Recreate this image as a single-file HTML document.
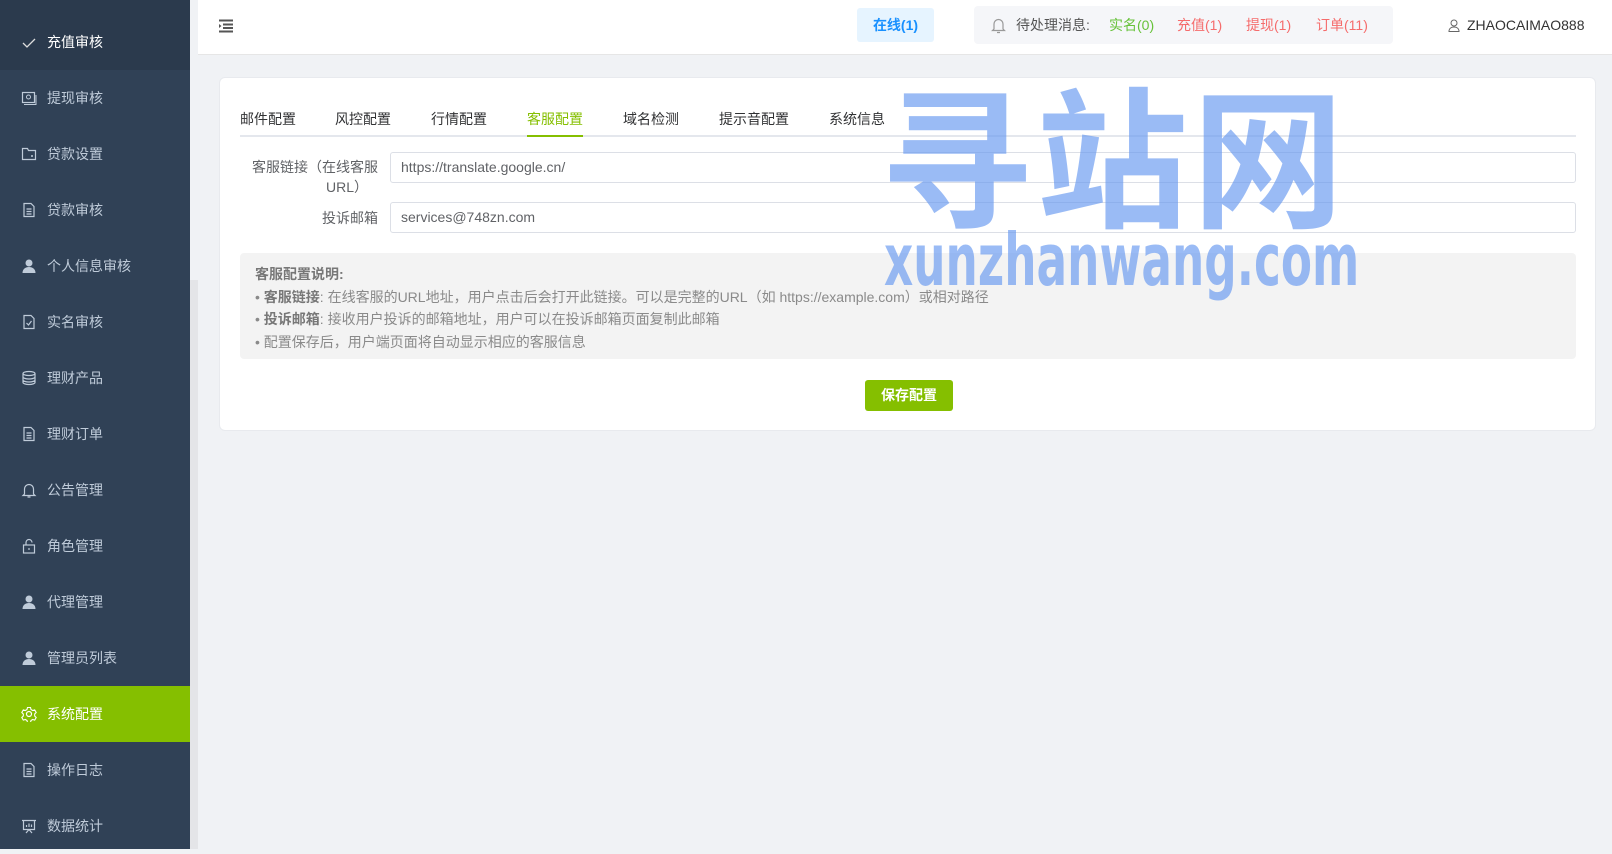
<!DOCTYPE html>
<html><head><meta charset="utf-8"><style>
*{margin:0;padding:0;box-sizing:border-box}
body{width:1612px;height:849px;overflow:hidden;background:#f0f2f5;font-family:"Liberation Sans","Noto Sans CJK SC",sans-serif;position:relative}
.side{position:absolute;left:0;top:0;width:190px;height:849px;background:#304156}
.strip{position:absolute;left:190px;top:0;width:8px;height:849px;background:#e4e5e8}
.strip i{position:absolute;left:0;top:0;width:8px;height:280px;background:#f0f2f5}
.it{position:absolute;left:0;width:190px;height:56px;color:#bfcbd9;font-size:14px;line-height:56px;padding-left:47px}
.it svg{position:absolute;left:21px;top:20px}
.head{position:absolute;left:198px;top:0;right:0;height:55px;background:#fff;border-bottom:1px solid #e6e6e6}
.card{position:absolute;left:219px;top:77px;width:1377px;height:354px;background:#fff;border-radius:6px;border:1px solid #e8eaee}
.tab{position:absolute;top:31px;font-size:14px;color:#303133}
.inp{position:absolute;left:170px;width:1186px;height:31px;border:1px solid #dcdfe6;border-radius:3px;font-size:14px;color:#606266;line-height:29px;padding-left:10px}
.lbl{position:absolute;font-size:14px;color:#606266;text-align:right}
.note{position:absolute;left:20px;top:175px;width:1336px;height:106px;background:#f3f3f3;border-radius:4px;padding:10px 0 0 15px;font-size:14px;color:#8a8a8a;line-height:22.5px}
.note b{color:#777}
</style></head><body>
<div class="side">
<div class="it" style="top:0;height:70px;line-height:84px;background:#2b3a4d;color:#fff"><svg width="16" height="16" viewBox="0 0 16 16" style="top:35px"><path d="M2 8l4 4 8-8" fill="none" stroke="#ddd" stroke-width="1.3"/></svg>充值审核</div>
<div class="it" style="top:70px"><svg width="16" height="16" viewBox="0 0 16 16"><rect x="1.5" y="2.5" width="12" height="10" fill="none" stroke="#bfcbd9" stroke-width="1.2"/><circle cx="7.5" cy="7" r="2" fill="none" stroke="#bfcbd9"/><path d="M3 14.5h12V5" fill="none" stroke="#bfcbd9"/></svg>提现审核</div>
<div class="it" style="top:126px"><svg width="16" height="16" viewBox="0 0 16 16"><path d="M1.5 2.5h5l1 2h7v9h-13z" fill="none" stroke="#bfcbd9" stroke-width="1.2"/><circle cx="11" cy="10" r="1" fill="#bfcbd9"/></svg>贷款设置</div>
<div class="it" style="top:182px"><svg width="16" height="16" viewBox="0 0 16 16"><path d="M3 1.5h7l3 3v10H3z M5.5 7h5 M5.5 9.5h5 M5.5 12h5" fill="none" stroke="#bfcbd9" stroke-width="1.2"/></svg>贷款审核</div>
<div class="it" style="top:238px"><svg width="16" height="16" viewBox="0 0 16 16"><circle cx="8" cy="5" r="3.5" fill="#bfcbd9"/><path d="M1.5 15c0-4 3-6 6.5-6s6.5 2 6.5 6z" fill="#bfcbd9"/></svg>个人信息审核</div>
<div class="it" style="top:294px"><svg width="16" height="16" viewBox="0 0 16 16"><path d="M3 1.5h7l3 3v10H3z M5.5 9l2 2 3-4" fill="none" stroke="#bfcbd9" stroke-width="1.2"/></svg>实名审核</div>
<div class="it" style="top:350px"><svg width="16" height="16" viewBox="0 0 16 16"><ellipse cx="8" cy="3.5" rx="6" ry="2" fill="none" stroke="#bfcbd9" stroke-width="1.2"/><path d="M2 3.5v9c0 1 2.7 2 6 2s6-1 6-2v-9 M2 7c0 1 2.7 2 6 2s6-1 6-2 M2 10c0 1 2.7 2 6 2s6-1 6-2" fill="none" stroke="#bfcbd9" stroke-width="1.2"/></svg>理财产品</div>
<div class="it" style="top:406px"><svg width="16" height="16" viewBox="0 0 16 16"><path d="M3 1.5h7l3 3v10H3z M5.5 7h5 M5.5 9.5h5 M5.5 12h5" fill="none" stroke="#bfcbd9" stroke-width="1.2"/></svg>理财订单</div>
<div class="it" style="top:462px"><svg width="16" height="16" viewBox="0 0 16 16"><path d="M3.5 12V7a4.5 4.5 0 019 0v5l1.5 1.5H2z M6.5 15h3" fill="none" stroke="#bfcbd9" stroke-width="1.2"/></svg>公告管理</div>
<div class="it" style="top:518px"><svg width="16" height="16" viewBox="0 0 16 16"><rect x="2.5" y="7" width="11" height="8" fill="none" stroke="#bfcbd9" stroke-width="1.2"/><path d="M5 7V4.5a3 3 0 016 0 M8 10v2" fill="none" stroke="#bfcbd9" stroke-width="1.2"/></svg>角色管理</div>
<div class="it" style="top:574px"><svg width="16" height="16" viewBox="0 0 16 16"><circle cx="8" cy="5" r="3.5" fill="#bfcbd9"/><path d="M1.5 15c0-4 3-6 6.5-6s6.5 2 6.5 6z" fill="#bfcbd9"/></svg>代理管理</div>
<div class="it" style="top:630px"><svg width="16" height="16" viewBox="0 0 16 16"><circle cx="8" cy="5" r="3.5" fill="#bfcbd9"/><path d="M1.5 15c0-4 3-6 6.5-6s6.5 2 6.5 6z" fill="#bfcbd9"/></svg>管理员列表</div>
<div class="it" style="top:686px;background:#85bf00;color:#fff"><svg width="16" height="16" viewBox="0 0 16 16"><circle cx="8" cy="8" r="2.5" fill="none" stroke="#fff" stroke-width="1.2"/><path d="M6.5 1.5h3l.5 2 1.7 1 2-.6 1.5 2.6-1.5 1.5v2l1.5 1.5-1.5 2.6-2-.6-1.7 1-.5 2h-3l-.5-2-1.7-1-2 .6L.8 11.5 2.3 10V8L.8 6.5l1.5-2.6 2 .6L6 3.5z" fill="none" stroke="#fff" stroke-width="1.1"/></svg>系统配置</div>
<div class="it" style="top:742px"><svg width="16" height="16" viewBox="0 0 16 16"><path d="M3 1.5h7l3 3v10H3z M5.5 7h5 M5.5 9.5h5 M5.5 12h5" fill="none" stroke="#bfcbd9" stroke-width="1.2"/></svg>操作日志</div>
<div class="it" style="top:798px"><svg width="16" height="16" viewBox="0 0 16 16"><path d="M1 2.5h14 M2.5 2.5v9h11v-9 M5 15l3-3.5 3 3.5 M5.5 9V7 M8 9V5.5 M10.5 9V6.5" fill="none" stroke="#bfcbd9" stroke-width="1.2"/></svg>数据统计</div>
</div>
<div class="strip"><i></i></div>
<div class="head">
<svg style="position:absolute;left:20px;top:19px" width="16" height="14" viewBox="0 0 16 14"><path d="M1 1.5h14 M5 5.5h10 M5 9h10 M1 12.5h14" stroke="#555" stroke-width="2"/><path d="M1 5l2.5 2L1 9z" fill="#555"/></svg>
<div style="position:absolute;left:659px;top:8px;width:77px;height:34px;background:#e6f4ff;border-radius:3px;color:#1890ff;font-size:14px;font-weight:bold;line-height:34px;text-align:center">在线(1)</div>
<div style="position:absolute;left:776px;top:6px;width:419px;height:38px;background:#f5f6f9;border-radius:4px;font-size:14px;line-height:38px;color:#555">
<svg style="position:absolute;left:17px;top:11px" width="15" height="17" viewBox="0 0 15 17"><path d="M3 12V7a4.5 4.5 0 019 0v5l1.5 1.5h-12z M6 15.5h3" fill="none" stroke="#999" stroke-width="1.2"/></svg>
<span style="position:absolute;left:42px">待处理消息:</span>
<span style="position:absolute;left:135px;color:#67c23a">实名(0)</span>
<span style="position:absolute;left:203px;color:#f56c6c">充值(1)</span>
<span style="position:absolute;left:272px;color:#f56c6c">提现(1)</span>
<span style="position:absolute;left:342px;color:#f56c6c">订单(11)</span>
</div>
<svg style="position:absolute;left:1250px;top:19px" width="12" height="13" viewBox="0 0 12 13"><circle cx="6" cy="4" r="3" fill="none" stroke="#666"/><path d="M1 12.5c0-3 2.2-4.5 5-4.5s5 1.5 5 4.5z" fill="none" stroke="#666"/></svg>
<span style="position:absolute;left:1269px;top:17px;font-size:14px;color:#333">ZHAOCAIMAO888</span>
</div>
<div class="card">
<div class="tab" style="left:20px">邮件配置</div>
<div class="tab" style="left:115px">风控配置</div>
<div class="tab" style="left:211px">行情配置</div>
<div class="tab" style="left:307px;color:#85bf00">客服配置</div>
<div class="tab" style="left:403px">域名检测</div>
<div class="tab" style="left:499px">提示音配置</div>
<div class="tab" style="left:609px">系统信息</div>
<div style="position:absolute;left:20px;top:57px;width:1336px;height:2px;background:#e4e7ed"></div>
<div style="position:absolute;left:307px;top:57px;width:56px;height:2px;background:#85bf00"></div>
<div class="lbl" style="left:20px;top:79px;width:138px;line-height:20px">客服链接（在线客服<br><span style="margin-right:10px">URL）</span></div>
<div class="inp" style="top:74px">https://translate.google.cn/</div>
<div class="lbl" style="left:20px;top:130px;width:138px">投诉邮箱</div>
<div class="inp" style="top:124px">services@748zn.com</div>
<div class="note"><b>客服配置说明:</b><br>• <b>客服链接</b>: 在线客服的URL地址，用户点击后会打开此链接。可以是完整的URL（如 https://example.com）或相对路径<br>• <b>投诉邮箱</b>: 接收用户投诉的邮箱地址，用户可以在投诉邮箱页面复制此邮箱<br>• 配置保存后，用户端页面将自动显示相应的客服信息</div>
<div style="position:absolute;left:645px;top:302px;width:88px;height:31px;background:#85bf00;border-radius:3px;color:#fff;font-size:14px;font-weight:bold;text-align:center;line-height:31px">保存配置</div>
</div>
<div style="position:absolute;left:880px;top:60px;font-size:152px;font-weight:bold;color:rgba(100,150,240,.65);letter-spacing:4px;line-height:180px;font-family:'Noto Sans CJK SC',sans-serif">寻站网</div>
<div style="position:absolute;left:884px;top:225px;font-size:72px;font-weight:bold;color:rgba(100,150,240,.65);line-height:70px;transform:scaleX(.63);transform-origin:left;font-family:'DejaVu Sans',sans-serif">xunzhanwang.com</div>
</body></html>
